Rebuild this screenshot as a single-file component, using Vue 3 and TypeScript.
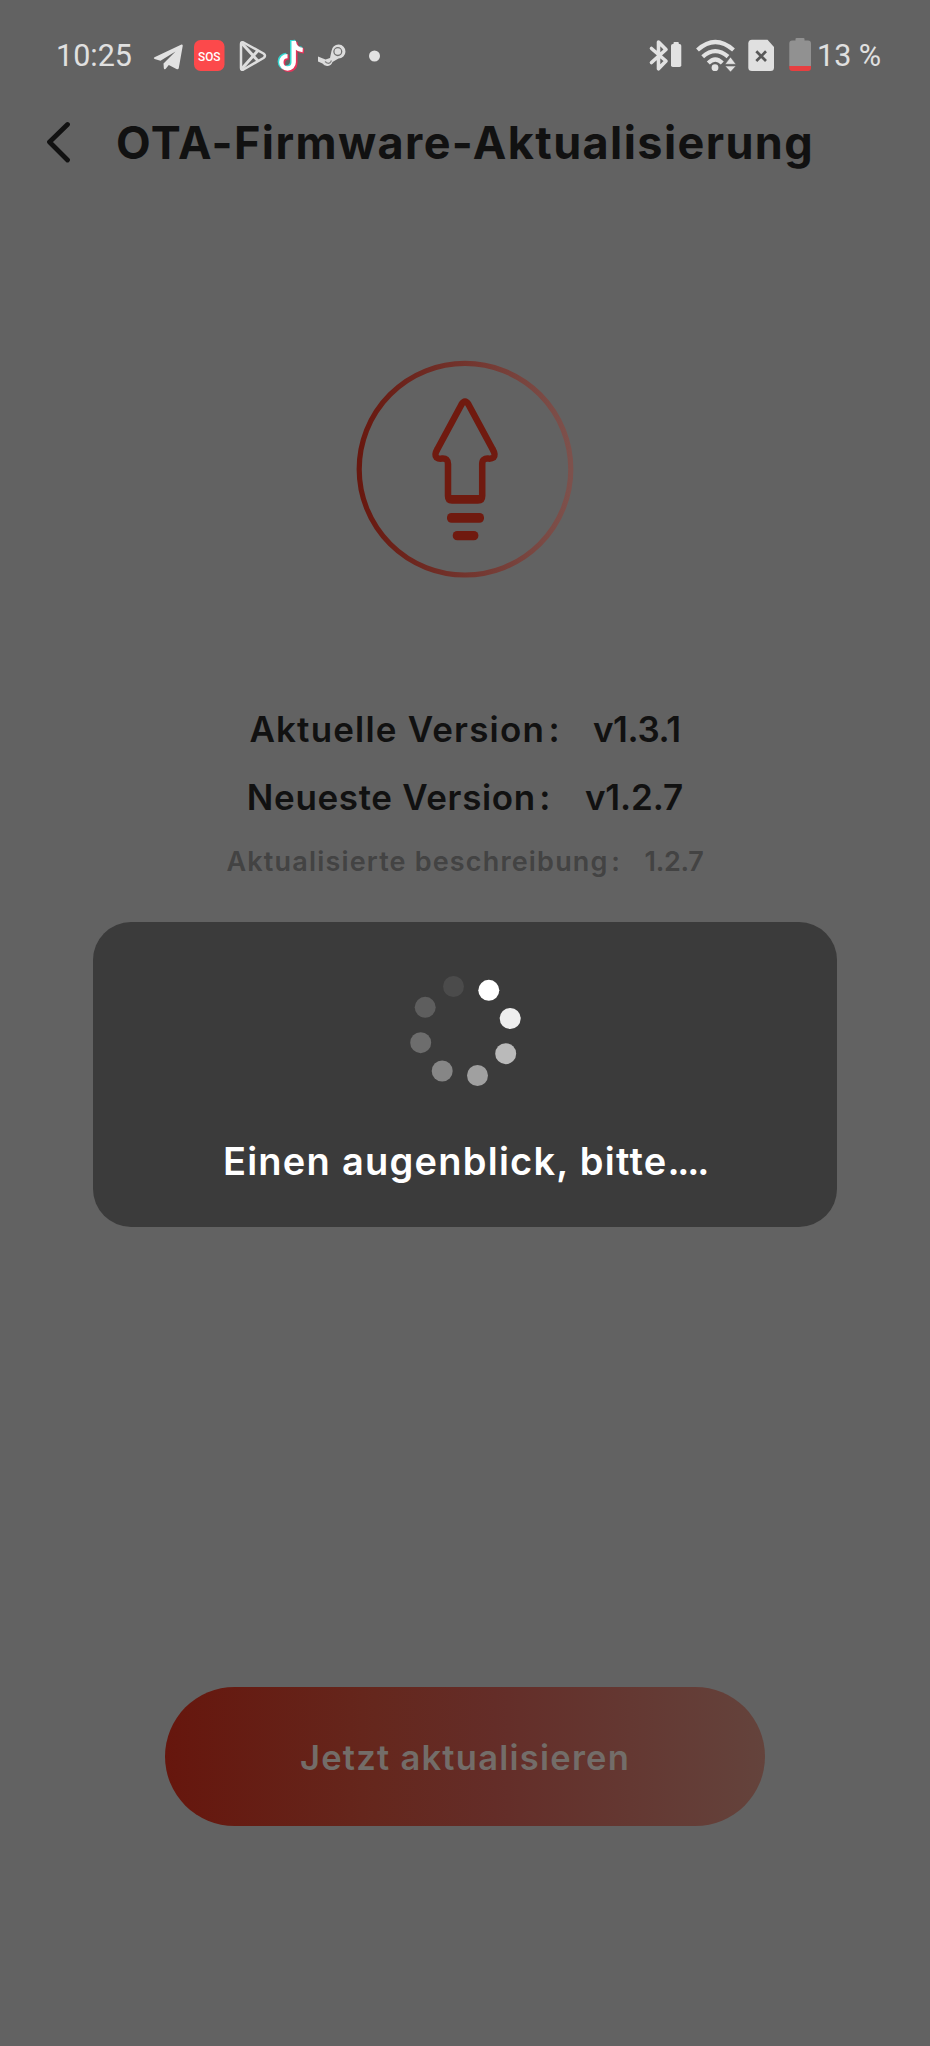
<script setup lang="ts">
interface VersionRow {
  key: string
  label: string
  value: string
}

interface Dot {
  x: number
  y: number
  color: string
}

const versions: VersionRow[] = [
  { key: 'current', label: 'Aktuelle Version', value: 'v1.3.1' },
  { key: 'latest', label: 'Neueste Version', value: 'v1.2.7' },
  { key: 'note', label: 'Aktualisierte beschreibung', value: '1.2.7' },
]

const dots: Dot[] = [
  { x: 78.8, y: 14.3, color: '#ffffff' },
  { x: 100.2, y: 42.5, color: '#eeeeee' },
  { x: 95.7, y: 77.7, color: '#bababa' },
  { x: 67.5, y: 99.5, color: '#a0a0a0' },
  { x: 32.2, y: 95, color: '#868686' },
  { x: 10.7, y: 66.7, color: '#6d6d6d' },
  { x: 15.2, y: 31.3, color: '#5e5e5e' },
  { x: 43.5, y: 10.5, color: '#4b4b4b' },
]
</script>

<template>
  <div class="screen">
    <header class="status">
      <span class="clock">10:25</span>
      <svg class="notices" width="240" height="40" viewBox="150 36 240 40">
        <path d="M154.500 57.200 L181.500 44.500 Q183 44 182.700 46 L178.800 68 Q178.300 70 176.400 69 L168.800 65 L165.500 69 Q164 70 163.800 68 L163.500 63.500 L175.500 51.500 L160.500 60.700 L154.500 59 Q153 58 154.500 57.200Z" fill="#e2e2e2" />
        <rect x="194" y="40" width="30.500" height="31" rx="6.500" fill="#fc494b" />
        <text x="209.300" y="61" class="sos" text-anchor="middle" textLength="22.500" lengthAdjust="spacingAndGlyphs">SOS</text>
        <g fill="none" stroke="#dedede" stroke-width="2.500" stroke-linejoin="round">
          <path d="M241 44 Q241 41.500 243.500 42.500 L263.500 53.500 Q266.500 55.800 263.500 58 L243.500 69.500 Q241 70.500 241 68Z" />
          <path d="M242 43.500 L258 61 M242 68.500 L258 50.500" stroke-width="3" />
        </g>
        <g fill="none" stroke-width="5">
          <path class="tt-cyan" d="M292.500 40 V61.500 A6.200 6.200 0 1 1 286.300 55.300 M292.500 40 Q293.500 48.500 301.500 49" />
          <path class="tt-red" d="M295 42.500 V63.300 A6.200 6.200 0 1 1 288.800 57.100 M295 42 Q296 50.500 304 51" />
          <path class="tt-white" d="M293.700 41 V62.300 A6.200 6.200 0 1 1 287.500 56.100 M293.700 41 Q294.700 49.500 302.700 50" />
        </g>
        <path d="M318 56.500 L325.500 59.500 L330 58 L331.500 51 A7 7 0 1 1 338.500 58.500 L332.500 62 A5.600 5.600 0 0 1 322.500 63.500 L318 61.500Z" fill="#dcdcdc" />
        <circle cx="337.800" cy="51.600" r="3.900" fill="none" stroke="#707070" stroke-width="1.300" />
        <path d="M325 61.500 Q329.500 65.500 331.500 60.500" fill="none" stroke="#858585" stroke-width="1.300" />
        <circle cx="374.500" cy="56" r="5.500" fill="#e2e2e2" />
      </svg>
      <svg class="signals" width="166" height="40" viewBox="648 36 166 40">
        <path d="M651.500 48.500 L666 61 L658.500 68.800 V42 L666 49.500 L651.500 62.500" fill="none" stroke="#e2e2e2" stroke-width="3.600" stroke-linejoin="round" stroke-linecap="round" />
        <rect x="671" y="44" width="10.300" height="23" rx="1.800" fill="#e2e2e2" />
        <rect x="673.500" y="42" width="5.300" height="4" rx="1" fill="#e2e2e2" />
        <g fill="none" stroke="#e2e2e2" stroke-width="4.200">
          <path d="M697.500 50 Q715.300 34 733.500 50" />
          <path d="M702.700 56.700 Q715.300 45.500 728 56.700" />
          <path d="M708.300 63 Q715.300 56 722.300 63" />
        </g>
        <circle cx="715" cy="67.700" r="3.400" fill="#e2e2e2" />
        <path d="M725 64.300 L730.500 57 L736 64.300Z M725 66 L736 66 L730.500 72Z" fill="#e2e2e2" stroke="#626262" stroke-width=".6" />
        <path d="M752 39.700 H767.500 L774 47 V67.500 Q774 71 770.500 71 H752 Q748.300 71 748.300 67.500 V43.500 Q748.300 39.700 752 39.700Z" fill="#e0e0e0" />
        <path d="M756.300 51.300 L766 61 M766 51.300 L756.300 61" stroke="#585858" stroke-width="2.700" />
        <path d="M795.500 40.500 V39 Q795.500 38 796.500 38 H803.500 Q804.500 38 804.500 39 V40.500 H808 Q811 40.500 811 43.500 V66 H789.300 V43.500 Q789.300 40.500 792.300 40.500Z" fill="#919191" />
        <path d="M789.300 66 H811 V68 Q811 71 808 71 H792.300 Q789.300 71 789.300 68Z" fill="#e73f40" />
      </svg>
      <span class="percent">13 %</span>
    </header>

    <nav class="titlebar">
      <svg class="back" width="26" height="42" viewBox="0 0 26 42">
        <path d="M21.500 3.500 L3.500 21 L21.500 39" fill="none" stroke="#111" stroke-width="4.800" stroke-linecap="round" stroke-linejoin="round" />
      </svg>
      <h1 class="title">OTA-Firmware-Aktualisierung</h1>
    </nav>

    <main class="content">
      <svg class="emblem" width="220" height="220" viewBox="355 359 220 220">
        <defs>
          <linearGradient id="ring" x1="0" x2="1" y1="0" y2="0">
            <stop offset="0" stop-color="#68180f" />
            <stop offset="1" stop-color="#7d514c" />
          </linearGradient>
        </defs>
        <circle cx="465" cy="469.200" r="105.800" fill="none" stroke="url(#ring)" stroke-width="5.200" />
        <path d="M461.500 404.500 Q465 398.500 468.500 404.500 L492.500 449 Q496 455 493.500 457.500 Q491.800 458.800 488.500 458.600 Q482.200 458 482.200 464 V496 Q482.200 500.500 478 500.500 H452 Q448 500.500 448 496 V464 Q448 458 442 458.600 Q438.500 459 436.500 457.500 Q434 455 437.500 449Z" fill="none" stroke="#701a0f" stroke-width="6.500" stroke-linejoin="round" />
        <path d="M448 495 H482.200 V499 Q482 500.500 478 500.500 H452 Q448.200 500.500 448 499Z" fill="#701a0f" />
        <rect x="447" y="513" width="37" height="9.700" rx="4.500" fill="#701a0f" />
        <rect x="452.700" y="531" width="25.700" height="9.300" rx="4.500" fill="#701a0f" />
      </svg>

      <section class="versions">
        <p v-for="row in versions" :key="row.key" class="row" :class="row.key">
          <span class="label">{{ row.label }}</span><span class="colon">:</span><span class="value">{{ row.value }}</span>
        </p>
      </section>

      <button class="update" type="button">Jetzt aktualisieren</button>
    </main>

    <div class="dialog" role="status">
      <svg class="spinner" width="111" height="110" viewBox="0 0 111 110">
        <circle v-for="(dot, i) in dots" :key="i" :cx="dot.x" :cy="dot.y" r="10.500" :fill="dot.color" />
      </svg>
      <p class="message">Einen augenblick, bitte<span class="ellipsis">....</span></p>
    </div>
  </div>
</template>

<style>
body {
  background: #626262;
}
</style>

<style scoped>
.screen {
  position: relative;
  width: 930px;
  height: 2046px;
  overflow: hidden;
  background: #626262;
  color: #111;
  font-family: Inter, "Liberation Sans", sans-serif;
}
.status {
  display: flex;
  align-items: center;
  height: 76px;
  padding: 36px 0 0 56px;
  box-sizing: border-box;
  color: #e0e0e0;
  font-family: Roboto, sans-serif;
  font-size: 30.5px;
  line-height: 40px;
  white-space: nowrap;
}
.clock {
  width: 94px;
}
.signals {
  margin-left: 258px;
}
.percent {
  margin-left: 3px;
}
.sos {
  fill: #fff;
  font: 500 13.5px Roboto, sans-serif;
}
.tt-cyan { stroke: #35d8d2; }
.tt-red { stroke: #e6345a; }
.tt-white { stroke: #fff; stroke-width: 4.4; }
.titlebar {
  display: flex;
  align-items: center;
  height: 132px;
  padding-left: 46px;
}
.titlebar .back {
  flex: none;
}
.title {
  margin: 2px 0 0 44px;
  font-size: 45px;
  line-height: 54px;
  font-weight: 700;
  letter-spacing: 1.4px;
  white-space: nowrap;
}
.content {
  display: flex;
  flex-direction: column;
  align-items: center;
}
.emblem {
  margin-top: 151px;
}
.versions {
  margin-top: 116px;
}
.row {
  display: flex;
  justify-content: center;
  margin: 0;
  height: 68px;
  line-height: 68px;
  font-size: 35px;
  font-weight: 600;
  white-space: nowrap;
}
.current .label {
  letter-spacing: 1.17px;
}
.current .value {
  letter-spacing: -0.4px;
}
.latest .label {
  letter-spacing: 0.65px;
}
.latest .value {
  margin-left: 31px;
  letter-spacing: -0.1px;
}
.colon {
  width: 18px;
  text-align: center;
}
.value {
  margin-left: 30px;
}
.note {
  height: 61px;
  line-height: 61px;
  font-size: 27px;
  color: #434343;
}
.note .label {
  letter-spacing: 1.17px;
}
.note .colon {
  width: 14px;
}
.note .value {
  margin-left: 22px;
  letter-spacing: -0.3px;
}
.update {
  width: 600px;
  height: 139px;
  margin-top: 795px;
  padding: 2px 0 0;
  border: 0;
  border-radius: 70px;
  background: linear-gradient(90deg, #66160d, #65271d 35%, #642d28 55%, #64433c);
  color: #736d69;
  font: 600 34.5px/137px Inter, sans-serif;
  letter-spacing: 1.25px;
}
.dialog {
  position: absolute;
  left: 93px;
  top: 922px;
  width: 744px;
  height: 305px;
  border-radius: 38px;
  background: #3b3b3b;
  display: flex;
  flex-direction: column;
  align-items: center;
}
.spinner {
  margin-top: 54px;
}
.message {
  margin: 50px 0 0;
  color: #fff;
  font-size: 38px;
  line-height: 50px;
  font-weight: 600;
  letter-spacing: 1.25px;
  white-space: nowrap;
}
.ellipsis {
  letter-spacing: -2.2px;
}
</style>
